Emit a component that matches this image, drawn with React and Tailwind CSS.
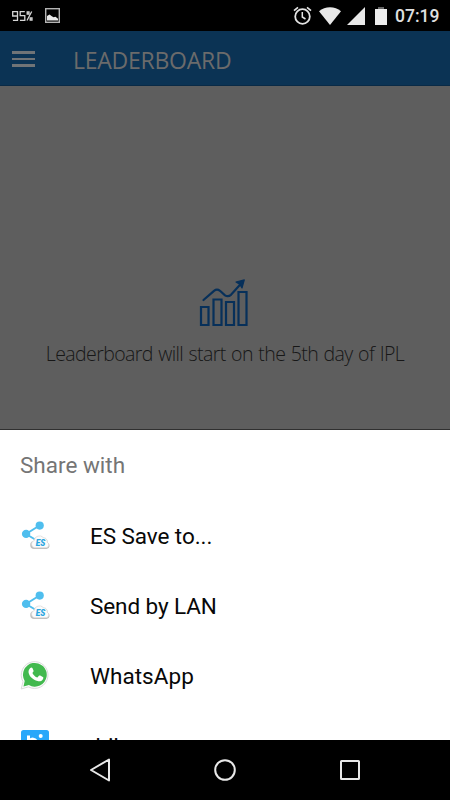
import React from "react";

function StatusBar() {
  return (
    <div className="flex h-[31px] shrink-0 items-center bg-black">
      <svg className="ml-3 h-[10px] w-[21px]" viewBox="0 0 21 10" fill="none" stroke="#d6d6d6" strokeWidth="1.3">
        <path d="M5.5 5H.7V.7h4.8v8.6H.9M12.8.7H8.2V4.6h4.6v4.7H7.9M19.7.5 15 9.5" />
        <path d="M15.2 1h1.8v2h-1.8zM18.2 7h1.8v2h-1.8z" />
      </svg>
      <svg className="ml-3 h-[15px] w-[15px]" viewBox="0 0 15 15">
        <rect x=".7" y=".7" width="13.6" height="13.6" fill="none" stroke="#b4b4b4" strokeWidth="1.4" />
        <path d="M2 12.5V8l2.5-1.5 2 1.5 2 1.3 2-.5 2.5 2v1.7z" fill="#e8e8e8" />
      </svg>
      <svg className="ml-auto h-[19px] w-[19px]" viewBox="0 0 19 19" fill="none" stroke="#e4e4e4">
        <circle cx="9.5" cy="10.5" r="7.3" strokeWidth="1.8" />
        <path d="M9.3 6v5l3.2 2" strokeWidth="1.5" />
        <path d="M1 4.6 5 1.3M18 4.6 14 1.3" strokeWidth="1.7" />
      </svg>
      <svg className="ml-[7px] h-[18px] w-[22px]" viewBox="0 0 22 18" fill="#e8e8e8">
        <path d="M11 18 0 4.2C6-1.2 16-1.2 22 4.2z" />
      </svg>
      <svg className="ml-[6px] h-[18px] w-[18px]" viewBox="0 0 18 18" fill="#e8e8e8">
        <path d="M18 0v18H0z" />
      </svg>
      <svg className="ml-[10px] h-[18px] w-[12px]" viewBox="0 0 12 18">
        <path d="M3 0h6v2H3z" fill="#666" />
        <path d="M0 2h12v16H0z" fill="#ececec" />
      </svg>
      <span className="mr-[11px] ml-[8px] w-[44px] pt-px font-[Roboto,sans-serif] text-[17.5px] leading-[20px] font-medium whitespace-nowrap text-[#e0e0e0]">
        07:19
      </span>
    </div>
  );
}

function ChartIcon() {
  return (
    <svg className="mr-[2px] h-[48px] w-[50px]" viewBox="0 0 50 48" fill="none" stroke="#07305a" strokeWidth="2.2">
      <path d="M2 28h7.500v18H2zM14.500 20.500h8V46h-8zM27 23h8v23h-8zM39.500 13h8v33h-8z" />
      <path d="M4.500 21 15 11.800q3-2.300 6 0l5 4.500q3 2 6-.5L43.500 3" strokeLinecap="round" />
      <path d="M37 3 45.300.9l-2.300 8.100-2.300-3.700z" fill="#07305a" strokeLinejoin="round" strokeWidth="1.200" />
    </svg>
  );
}

function EsIcon() {
  return (
    <svg className="h-[30px] w-[30px]" viewBox="0 0 30 30">
      <path d="M19.5 4.5 6 13l10 6" fill="none" stroke="#4fbeee" strokeWidth="1.9" />
      <circle cx="19.7" cy="4.600" r="4.1" fill="#4fbeee" />
      <circle cx="6.1" cy="12.900" r="4.2" fill="#4fbeee" />
      <path d="M14.500 28a4 4 0 0 1-.5-8 5.500 5.500 0 0 1 9.500-3.200 4.500 4.500 0 0 1 4 4.700A3.400 3.400 0 0 1 26.500 28z" fill="#bdbdbd" />
      <path d="M14.500 26.800a3.700 3.700 0 0 1-.3-7.200 5.300 5.300 0 0 1 9.200-3 4.400 4.400 0 0 1 3.800 4.600 3 3 0 0 1-.7 5.600z" fill="#fbfbfb" stroke="#d4d4d4" strokeWidth=".6" />
      <text x="15.8" y="24.5" fill="#2aa5df" fontFamily="Roboto, sans-serif" fontSize="8.5" fontWeight="900" fontStyle="italic" textLength="9.5" lengthAdjust="spacingAndGlyphs">
        ES
      </text>
    </svg>
  );
}

function WhatsAppIcon() {
  return (
    <svg className="-mt-[2px] h-[30px] w-[30px]" viewBox="0 0 30 30">
      <path d="M1.200 29 3 21.700a13.400 13.400 0 1 1 5.400 5.200z" fill="#fbfbfb" stroke="#d7d7d7" strokeWidth=".9" />
      <path d="M3.500 26.500 4.700 21a11.900 11.900 0 1 1 4.200 4.100z" fill="#42b94e" />
      <path d="M10.300 8c.7-.8 1.700-.8 2.100 0l1.100 2.600c.3.900-.4 1.600-1.100 2.300 1 2.200 2.800 3.800 5 4.700l1.500-1.800c.4-.5.8-.4 1.300-.2l2.600 1.300c.6.300.6.8.4 1.500-.6 2.400-3.300 3.300-5.600 2.700-4.800-1.300-8.200-4.800-9-8.400-.3-1.900.4-3.600 1.700-4.700z" fill="white" />
    </svg>
  );
}

function HikeIcon() {
  return (
    <svg className="h-[30px] w-[30px] overflow-visible" viewBox="0 0 30 30">
      <rect x="1" y="-1" width="28" height="29" rx="2.5" fill="#28a7fa" />
      <path d="M8.500 4.500V22M8.500 13c2-7 8-6 8 0v9M20.500 9.500V22" fill="none" stroke="white" strokeWidth="3" />
      <circle cx="20.7" cy="5" r="2" fill="white" />
    </svg>
  );
}

const targets = [
  { label: "ES Save to...", Icon: EsIcon, spacing: "tracking-[-0.07px]" },
  { label: "Send by LAN", Icon: EsIcon, spacing: "tracking-[-0.09px]" },
  { label: "WhatsApp", Icon: WhatsAppIcon, spacing: "tracking-[0.04px]" },
  { label: " hike", Icon: HikeIcon, spacing: "tracking-normal" },
];

export default function App() {
  return (
    <div className="flex h-[800px] w-[450px] flex-col overflow-hidden bg-[#5e5e5e]">
      <StatusBar />
      <header className="flex h-[55px] shrink-0 items-center border-b border-[#092a46] bg-[#0b3354] pl-3">
        <div className="mt-[2px] flex w-[23px] flex-col gap-[4px]">
          <span className="h-[2.5px] bg-[#707477]" />
          <span className="h-[2.5px] bg-[#707477]" />
          <span className="h-[2.5px] bg-[#707477]" />
        </div>
        <h1 className="ml-[38px] pt-[3px] font-['Open_Sans',sans-serif] text-[23px] leading-8 font-normal tracking-[-0.25px] whitespace-nowrap text-[#6b6b6b]">
          LEADERBOARD
        </h1>
      </header>
      <main className="flex h-[344px] shrink-0 flex-col items-center border-b border-[#303030] pt-[193px]">
        <ChartIcon />
        <p className="mt-[13px] font-['Open_Sans',sans-serif] text-[19.5px] leading-7 font-light tracking-[-0.6px] whitespace-nowrap text-[#171717] [word-spacing:1px]">
          Leaderboard will start on the 5th day of IPL
        </p>
      </main>
      <section className="h-[310px] shrink-0 overflow-hidden bg-white font-[Roboto,sans-serif]">
        <h2 className="flex h-[71px] items-center pl-5 text-[22.5px] font-normal text-[#757575]">
          <span className="pt-px">Share with</span>
        </h2>
        <ul>
          {targets.map(({ label, Icon, spacing }) => (
            <li key={label} className="flex h-[70px] items-center pl-5">
              <Icon />
              <span className={`ml-10 pt-[2px] text-[22.5px] whitespace-pre text-[#080808] ${spacing}`}>{label}</span>
            </li>
          ))}
        </ul>
      </section>
      <nav className="flex h-[60px] shrink-0 items-center justify-between bg-black px-[89px]">
        <svg className="h-[24px] w-[22px]" viewBox="0 0 22 24" fill="none" stroke="#e8e8e8" strokeWidth="2">
          <path d="M20 1.5v21L2 12z" strokeLinejoin="round" />
        </svg>
        <svg className="h-[22px] w-[22px]" viewBox="0 0 22 22" fill="none" stroke="#e8e8e8" strokeWidth="2">
          <circle cx="11" cy="11" r="9.8" />
        </svg>
        <svg className="h-[20px] w-[22px]" viewBox="0 0 22 20" fill="none" stroke="#e8e8e8" strokeWidth="2">
          <rect x="2" y="1" width="18" height="18" rx=".5" />
        </svg>
      </nav>
    </div>
  );
}
